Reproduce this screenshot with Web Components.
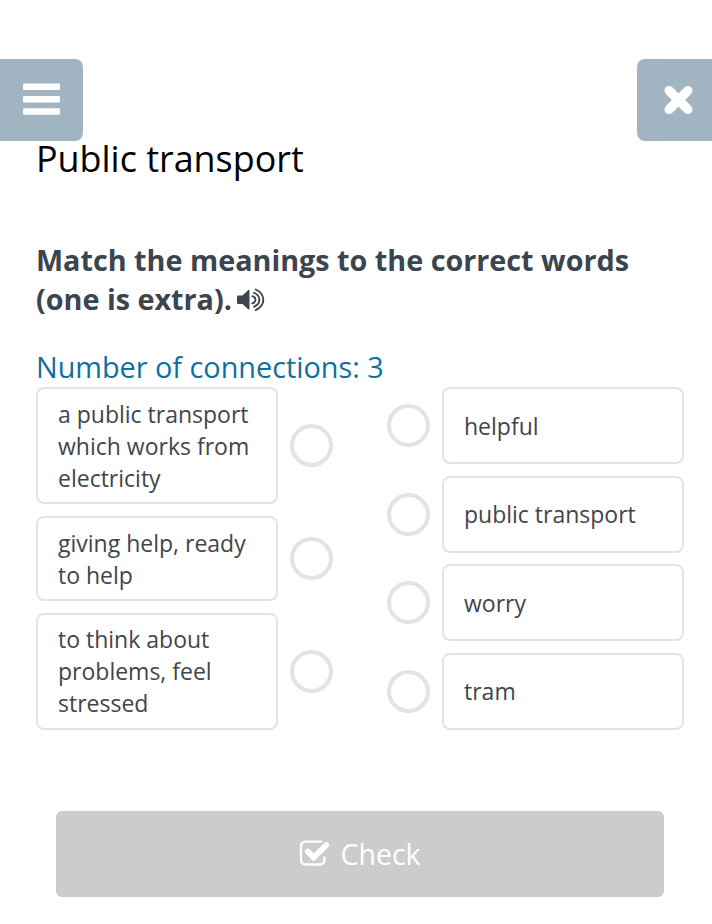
<!DOCTYPE html>
<html lang="en"><head><meta charset="utf-8"><title>Public transport</title>
<style>body{margin:0;background:#fff}</style></head><body><quiz-page></quiz-page>
<script>
const define=(name,css,html)=>customElements.define(name,class extends HTMLElement{
  constructor(){super();this.attachShadow({mode:'open'}).innerHTML=`<style>*{box-sizing:border-box}${css}</style>${html}`;}
});
define('nav-button',`:host{box-sizing:border-box;display:flex;align-items:center;width:83px;height:82px;background:#a0b5c1;border-radius:0 8px 8px 0;padding:0 0 2px 23px}:host([side=right]){width:75px;border-radius:8px 0 0 8px;padding:0 0 0 26px}`,`<slot></slot>`);
define('match-card',`:host{box-sizing:border-box;display:flex;align-items:center;width:242px;border:2px solid #e0e4e6;border-radius:8px;padding:0 16px 0 20px;font-size:23px;line-height:32px;color:#40464c;background:#fff}`,`<span><slot></slot></span>`);
define('match-dot',`:host{box-sizing:border-box;display:block;width:43px;height:43px;border:4px solid #e0e4e7;border-radius:50%;flex:none}`,``);
define('match-row',`:host{display:flex;align-items:center;gap:12px}:host([side=right]){flex-direction:row-reverse}match-card{height:var(--h)}`,`<match-card><slot></slot></match-card><match-dot></match-dot>`);
define('check-button',`:host{display:flex;height:86px;margin:81px 48px 0 56px;background:#ccc;border-radius:6px;align-items:center;justify-content:center;gap:11px;color:#fff;font-size:28.5px}svg{display:block}`,`<svg width="30" height="28" viewBox="0 0 30 28"><path d="M22.5 1.7H7Q2 1.7 2 6.7V19.5Q2 24.5 7 24.5H20.5Q25.5 24.5 25.5 19.5V17.5" fill="none" stroke="#fff" stroke-width="2.3" stroke-linecap="round"/><path d="M8.8 11.5L14.7 17.5L27.3 5" fill="none" stroke="#fff" stroke-width="5.8" stroke-linecap="round"/></svg><span><slot></slot></span>`);
define('quiz-page',`:host{display:flow-root;width:712px;height:924px;font-family:"Open Sans","Noto Sans",sans-serif;background:#fff}
nav{display:flex;justify-content:space-between;margin-top:59px}h1,h2,p{margin:0 36px}h1{font-weight:400;font-size:35.9px;line-height:36px;color:#000}h2{font-size:28.75px;line-height:39px;color:#3c444d;margin-top:63px}h2 svg{vertical-align:-2px;margin-left:-2px}p{font-size:28.8px;line-height:39px;color:#0f6f9f;margin-top:29px;margin-bottom:1px}main{display:flex;justify-content:space-between;padding:0 28px 0 36px}.l,.r{display:flex;flex-direction:column;gap:12px}.r{gap:11.6px}`,`
<nav><nav-button><svg width="37" height="32" viewBox="0 0 37 32"><g fill="#fff"><rect y=".5" width="37" height="6.5" rx="1.2"/><rect y="12.9" width="37" height="6.5" rx="1.2"/><rect y="25.2" width="37" height="6.5" rx="1.2"/></g></svg></nav-button><nav-button side="right"><svg width="31" height="30" viewBox="0 0 31 30"><path d="M6.3 5.8L24.7 24.2M24.7 5.8L6.3 24.2" stroke="#fff" stroke-width="9"/><path d="M6.3 5.8L24.7 24.2M24.7 5.8L6.3 24.2" stroke="#fff" stroke-width="6" stroke-linecap="square"/><path d="M6 5.5L25 24.5M25 5.5L6 24.5" stroke="#fff" stroke-width="9" stroke-linecap="round"/></svg></nav-button></nav>
<h1>Public transport</h1><h2>Match the meanings to the correct words<br>(one is extra). <svg width="28" height="24" viewBox="0 0 28 24"><path d="M1 7.5H5.5L11 2.2Q12.5 1 12.5 3V20.5Q12.5 22.5 11 21L5.5 16H1Q0 16 0 15V8.5Q0 7.5 1 7.5Z" fill="#3c444d"/><path d="M15.3 8.2Q18.5 9 18.5 11.8T15.3 15.4M17 4.8Q22.4 7 22.4 11.8T17 18.8M18.7 1.5Q26.3 5 26.3 11.8T18.7 22.1" fill="none" stroke="#3c444d" stroke-width="1.9" stroke-linecap="round"/></svg></h2><p>Number of connections: 3</p>
<main><div class="l"><match-row style="--h:117px">a public transport<br>which works from<br>electricity</match-row><match-row style="--h:85px">giving help, ready<br>to help</match-row><match-row style="--h:116.8px">to think about<br>problems, feel<br>stressed</match-row></div><div class="r"><match-row side="right" style="--h:77px">helpful</match-row><match-row side="right" style="--h:77px">public transport</match-row><match-row side="right" style="--h:77px">worry</match-row><match-row side="right" style="--h:77px">tram</match-row></div></main><check-button>Check</check-button>`);
</script></body></html>
